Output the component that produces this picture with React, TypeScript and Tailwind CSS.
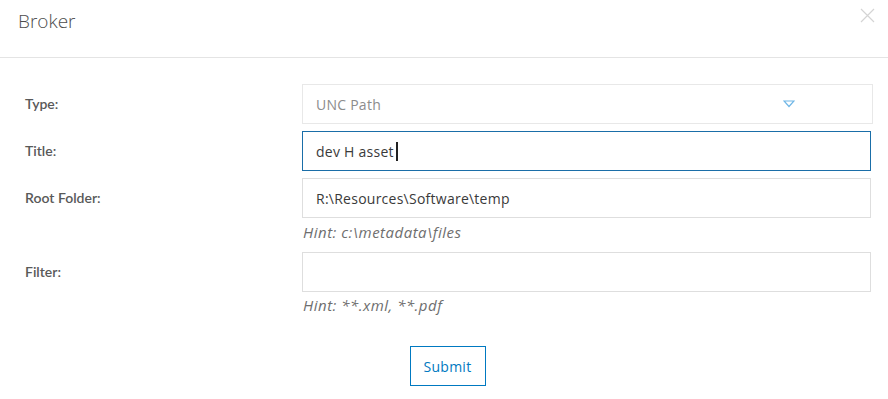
import React from "react";

const font = { fontFamily: "'Open Sans', Lato, 'Liberation Sans', sans-serif" };
const labelFont = { fontFamily: "Lato, 'Open Sans', sans-serif" };

function Label({ children }: { children: React.ReactNode }) {
  return (
    <div className="w-[277px] pt-[10px] text-[14px] leading-[20px] font-semibold text-[#595959]" style={labelFont}>
      {children}
    </div>
  );
}

export default function App() {
  return (
    <div className="w-[888px] h-[399px] bg-white text-[#4c4c4c] overflow-hidden" style={font}>
      <div className="h-[58px] border-b border-[#e4e4e4] flex items-start justify-between">
        <div className="pl-[18px] pt-[7px] text-[19px] leading-[28px] font-light text-[#4c4c4c]">Broker</div>
        <svg className="mt-[8px] mr-[13px]" width="15" height="15" viewBox="0 0 15 15">
          <path d="M1 1 L14 14 M14 1 L1 14" stroke="#d4d4d4" strokeWidth="1.2" />
        </svg>
      </div>
      <div className="pl-[25px] pr-[15px] pt-[26px] flex flex-col">
        <div className="flex">
          <Label>Type:</Label>
          <div className="flex-1 h-[40px] border border-[#e8e8e8] flex items-center pl-[13px] relative">
            <span className="text-[14px] tracking-[0.25px] text-[#8c8c8c]">UNC Path</span>
            <svg className="absolute left-[480px] top-[15px]" width="12" height="8" viewBox="0 0 12 8">
              <path d="M1 1 L11 1 L6 6.5 Z" fill="none" stroke="#6fb6e6" strokeWidth="1.2" />
            </svg>
          </div>
        </div>
        <div className="flex mt-[7px]">
          <Label>Title:</Label>
          <div className="flex-1 mr-[2px] h-[40px] border border-[#1a6ea8] flex items-center pl-[13px]">
            <span className="text-[14px] tracking-[0.25px] text-[#3a3a3a]">dev H asset</span>
            <span className="ml-[2px] w-[2px] h-[19px] bg-[#222]" />
          </div>
        </div>
        <div className="flex mt-[7px]">
          <Label>Root Folder:</Label>
          <div className="flex-1 mr-[2px] flex flex-col">
            <div className="h-[40px] border border-[#dedede] flex items-center pl-[13px]">
              <span className="text-[14px] tracking-[0.25px] text-[#3a3a3a]">R:\Resources\Software\temp</span>
            </div>
            <div className="pl-[1px] pt-[3px] text-[15px] tracking-[0.5px] italic text-[#6e6e6e] leading-[22px]">Hint: c:\metadata\files</div>
          </div>
        </div>
        <div className="flex mt-[9px]">
          <Label>Filter:</Label>
          <div className="flex-1 mr-[2px] flex flex-col">
            <div className="h-[40px] border border-[#dedede]" />
            <div className="pl-[1px] pt-[2px] text-[15px] tracking-[0.5px] italic text-[#6e6e6e] leading-[22px]">Hint: **.xml, **.pdf</div>
          </div>
        </div>
        <div className="flex justify-center mt-[30px]">
          <button className="ml-[-3px] w-[76px] h-[40px] border border-[#0079c1] text-[#0079c1] text-[14px] tracking-[0.25px]">Submit</button>
        </div>
      </div>
    </div>
  );
}
